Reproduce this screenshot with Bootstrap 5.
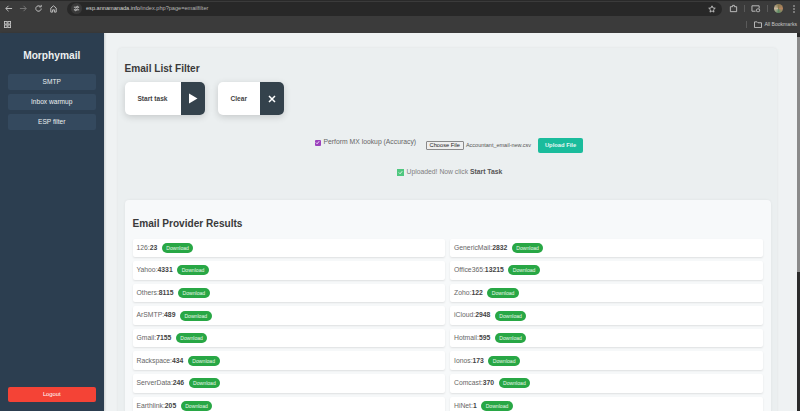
<!DOCTYPE html>
<html lang="en">
<head>
  <meta charset="UTF-8">
  <meta name="viewport" content="width=device-width, initial-scale=1.0">
  <title>Email List Filter</title>
  <link href="https://cdn.jsdelivr.net/npm/bootstrap@5.3.0/dist/css/bootstrap.min.css" rel="stylesheet">
  <style>
    html, body { height: 411px; overflow: hidden; }
    body { font-family: "Liberation Sans", Arial, sans-serif; font-size: 7.5px; background: #eff2f3; color: #333; }
    svg { display: block; }
    .chrome-top { height: 16px; background: #3b3b3b; border-top: 1px solid #2a2a2a; padding: 0 4px; color: #c7c7c7; }
    .chrome-nav { width: 13px; margin-right: 2px; }
    .url-pill { height: 14px; width: 258px; flex: 1 1 auto; background: #282828; border-radius: 7px; padding: 0 6px 0 4px; margin: 0 7px 0 3px; font-size: 5.6px; color: #d5d5d5; }
    .url-pill span { color: #b4b4b4; }
    .tune-dot { width: 11px; height: 11px; margin-right: 4px; border-radius: 50%; background: #3a3a3a; }
    .sep-v { width: 1px; height: 7px; background: #5a5a5a; margin: 0 6px; }
    .avatar { width: 9px; height: 9px; border-radius: 50%; background: conic-gradient(#8a7a50, #b5845f, #5d8a64, #c9b9a0, #8a7a50); }
    .menu-dots { margin: 0 1.5px 0 9.5px; }
    .chrome-bm { height: 17px; background: #3b3b3b; padding: 0 3px 0 4px; color: #c7c7c7; font-size: 5.1px; }
    .bm-sep { margin: 0 7px 0 0; }
    .bm-folder { margin-right: 2px; }
    .app-wrap { height: 378px; }
    .side-panel { width: 103.5px; flex: 0 0 103.5px; background: #2c3e50; padding: 17px 7.5px 9px; box-shadow: 1px 0 2px rgba(0,0,0,.15); }
    .side-title { font-size: 10.2px; font-weight: 700; color: #ecf0f1; text-align: center; margin: 0 0 12px; line-height: 12px; }
    .side-link { display: block; height: 16px; line-height: 16px; margin-bottom: 4px; background: #34495e; border-radius: 2px; color: #ecf0f1; text-align: center; font-size: 6.6px; text-decoration: none; }
    .logout-btn { height: 15px; line-height: 15px; background: #f44336; border-radius: 2px; color: #fff; text-align: center; font-size: 5.8px; text-decoration: none; display: block; }
    .main-area { flex: 1 1 auto; min-width: 0; padding: 15px 19.5px 0 14.5px; overflow: hidden; }
    .filter-card { height: 500px; background: #ebeff0; border-radius: 4px; box-shadow: 0 0 3px rgba(0,0,0,.07); padding: 15px 6.5px 0; }
    .page-head { font-size: 10.1px; font-weight: 700; color: #3a3a3a; line-height: 12px; margin: 0 0 7px; }
    .task-btn { height: 33px; background: #fff; border-radius: 5px; box-shadow: 0 2px 7px rgba(0,0,0,.16); overflow: hidden; font-weight: 700; font-size: 6.6px; color: #444; }
    .task-label { text-align: center; flex: 1 1 auto; }
    .task-icon { width: 24.5px; height: 33px; background: #34424c; }
    .task-start { width: 80.5px; }
    .task-clear { width: 66px; margin-left: 13px; }
    .upload-row { margin-top: 22px; padding-left: 190px; height: 16px; }
    .mx-check { width: 6px; height: 6px; background: #9b42bd; border-radius: 1px; margin-right: 3px; }
    .mx-label { font-size: 6.8px; color: #666; margin-right: 9.5px; margin-bottom: 5px; }
    .mx-box { margin-bottom: 5px; }
    .file-btn { font-size: 5.7px; height: 9px; line-height: 7px; border: 1px solid #8a8a8a; background: #efefef; border-radius: 1px; padding: 0 3px; color: #222; margin-right: 2px; }
    .file-name { font-size: 5.5px; color: #555; margin-right: 7px; }
    .upload-btn { width: 45px; height: 15px; line-height: 15px; background: #1abc9c; border-radius: 2px; color: #e8f8f5; font-size: 5.8px; text-align: center; font-weight: 700; }
    .upload-note { margin: 14px 0 0; font-size: 6.8px; color: #808080; height: 10px; padding-left: 272px; }
    .upload-note b { color: #555; }
    .ok-tick { width: 7px; height: 7px; background: #4fc77f; margin-right: 3px; }
    .result-panel { margin-top: 23px; background: #f7f9fa; border-radius: 4px; box-shadow: 0 0 3px rgba(0,0,0,.06); padding: 17.5px 8px 0; }
    .result-head { font-size: 10.1px; font-weight: 700; color: #3a3a3a; line-height: 12px; margin: 0 0 9px; }
    .result-grid { display: grid; grid-template-columns: 1fr 1fr; column-gap: 5px; row-gap: 4px; }
    .result-item { height: 18.6px; background: #fff; border-radius: 2px; box-shadow: 0 1px 2px rgba(0,0,0,.1); padding: 0 4px; color: #666; font-size: 6.8px; }
    .result-item b { color: #444; }
    .dl-pill { margin-left: 4.5px; background: #28a745; color: #e9f7ec; border-radius: 5px; height: 10px; line-height: 10px; padding: 0 4.5px; font-size: 5.1px; }
    .scroll-rail { width: 3.5px; flex: 0 0 3.5px; background: #2b2b2b; }
    .scroll-thumb { height: 235px; margin-top: 4px; background: #8a8a8a; }
  </style>
</head>
<body>
  <!-- browser toolbar -->
  <div class="chrome-top d-flex align-items-center">
    <div class="chrome-nav"><svg width="9" height="9" viewBox="0 0 10 10" fill="none" stroke="#bdbdbd" stroke-width="1.1"><path d="M9 5H2M5 2 2 5l3 3"/></svg></div>
    <div class="chrome-nav"><svg width="9" height="9" viewBox="0 0 10 10" fill="none" stroke="#757575" stroke-width="1.1"><path d="M1 5h7M5 2l3 3-3 3"/></svg></div>
    <div class="chrome-nav"><svg width="9" height="9" viewBox="0 0 10 10" fill="none" stroke="#bdbdbd" stroke-width="1.1"><path d="M8 5a3 3 0 1 1-1-2.2M8 1v2.2H5.8"/></svg></div>
    <div class="chrome-nav"><svg width="9" height="9" viewBox="0 0 10 10" fill="none" stroke="#bdbdbd" stroke-width="1.1"><path d="M2 4.5 5 2l3 2.5V9H6V6.5H4V9H2z"/></svg></div>
    <div class="url-pill d-flex align-items-center">
      <div class="tune-dot d-flex align-items-center justify-content-center"><svg width="7" height="7" viewBox="0 0 8 8" fill="none" stroke="#d0d0d0"><path d="M1 2.5h3M6 2.5h1M1 5.5h1M4 5.5h3"/><circle cx="5" cy="2.5" r="1"/><circle cx="3" cy="5.5" r="1"/></svg></div>
      <div class="flex-grow-1">esp.annamanada.info<span>/index.php?page=emailfilter</span></div>
      <svg width="8" height="8" viewBox="0 0 10 10" fill="none" stroke="#d5d5d5"><path d="m5 1 1.2 2.7 2.9.3-2.2 2 .6 2.9L5 7.4 2.5 8.9l.6-2.9L.9 4l2.9-.3z"/></svg>
    </div>
    <svg width="9" height="9" viewBox="0 0 10 10" fill="none" stroke="#c7c7c7"><path d="M1.5 3H4V1.5h2V3h2.5v5.5h-7z"/></svg>
    <div class="sep-v"></div>
    <svg width="10" height="9" viewBox="0 0 11 10" fill="none" stroke="#c7c7c7"><path d="M5 8H1V2h8v3"/><rect x="6" y="5.5" width="3.5" height="3" rx="1"/></svg>
    <div class="sep-v"></div>
    <div class="avatar"></div>
    <svg class="menu-dots" width="2" height="8" viewBox="0 0 2 8" fill="#c7c7c7"><circle cx="1" cy="1" r=".8"/><circle cx="1" cy="4" r=".8"/><circle cx="1" cy="7" r=".8"/></svg>
  </div>
  <div class="chrome-bm d-flex align-items-center">
    <svg width="7" height="7" viewBox="0 0 8 8" fill="none" stroke="#c7c7c7"><rect x=".5" y=".5" width="3" height="3"/><rect x="4.5" y=".5" width="3" height="3"/><rect x=".5" y="4.5" width="3" height="3"/><rect x="4.5" y="4.5" width="3" height="3"/></svg>
    <div class="flex-grow-1"></div>
    <div class="sep-v bm-sep"></div>
    <svg class="bm-folder" width="8" height="7" viewBox="0 0 9 8" fill="none" stroke="#c7c7c7"><path d="M.5 1h3l1 1h4v5.5h-8z"/></svg>
    <div>All Bookmarks</div>
  </div>

  <div class="app-wrap d-flex">
    <nav class="side-panel d-flex flex-column">
      <h1 class="side-title">Morphymail</h1>
      <a class="side-link" href="#">SMTP</a>
      <a class="side-link" href="#">Inbox warmup</a>
      <a class="side-link" href="#">ESP filter</a>
      <a class="logout-btn mt-auto" href="#">Logout</a>
    </nav>
    <main class="main-area">
      <div class="filter-card">
        <h2 class="page-head">Email List Filter</h2>
        <div class="d-flex">
          <div class="task-btn task-start d-flex align-items-center">
            <div class="task-label">Start task</div>
            <div class="task-icon d-flex align-items-center justify-content-center"><svg width="10" height="11" viewBox="0 0 10 11" fill="#fff"><path d="M1 .5 9.5 5.5 1 10.5z"/></svg></div>
          </div>
          <div class="task-btn task-clear d-flex align-items-center">
            <div class="task-label">Clear</div>
            <div class="task-icon d-flex align-items-center justify-content-center"><svg width="8" height="8" viewBox="0 0 8 8" fill="none" stroke="#fff" stroke-width="1.5"><path d="m1 1 6 6M7 1 1 7"/></svg></div>
          </div>
        </div>
        <div class="upload-row d-flex align-items-center">
          <div class="mx-check mx-box d-flex align-items-center justify-content-center"><svg width="5" height="5" viewBox="0 0 6 6" fill="none" stroke="#fff"><path d="m1 3 1.5 1.5L5 1.5"/></svg></div>
          <div class="mx-label">Perform MX lookup (Accuracy)</div>
          <div class="file-btn">Choose File</div>
          <div class="file-name">Accountant_email-new.csv</div>
          <div class="upload-btn">Upload File</div>
        </div>
        <div class="upload-note d-flex align-items-center">
          <div class="ok-tick d-flex align-items-center justify-content-center"><svg width="5" height="5" viewBox="0 0 6 6" fill="none" stroke="#fff"><path d="m1 3 1.5 1.5L5 1.5"/></svg></div>
          <div>Uploaded! Now click&nbsp;<b>Start Task</b></div>
        </div>
        <div class="result-panel">
          <h2 class="result-head">Email Provider Results</h2>
          <div class="result-grid" id="resultGrid"></div>
        </div>
      </div>
    </main>
    <div class="scroll-rail"><div class="scroll-thumb"></div></div>
  </div>

  <script>
    // provider counts, left column then right column per row
    const providers = [
      ["126", 23], ["GenericMail", 2832],
      ["Yahoo", 4331], ["Office365", 13215],
      ["Others", 8115], ["Zoho", 122],
      ["ArSMTP", 489], ["iCloud", 2948],
      ["Gmail", 7155], ["Hotmail", 595],
      ["Rackspace", 434], ["Ionos", 173],
      ["ServerData", 246], ["Comcast", 370],
      ["Earthlink", 205], ["HiNet", 1]
    ];
    document.getElementById("resultGrid").innerHTML = providers.map(p =>
      '<div class="result-item d-flex align-items-center"><span>' + p[0] + ':<b>' + p[1] + '</b></span><span class="dl-pill">Download</span></div>'
    ).join("");
  </script>
  <script src="https://cdn.jsdelivr.net/npm/bootstrap@5.3.0/dist/js/bootstrap.bundle.min.js"></script>
</body>
</html>
